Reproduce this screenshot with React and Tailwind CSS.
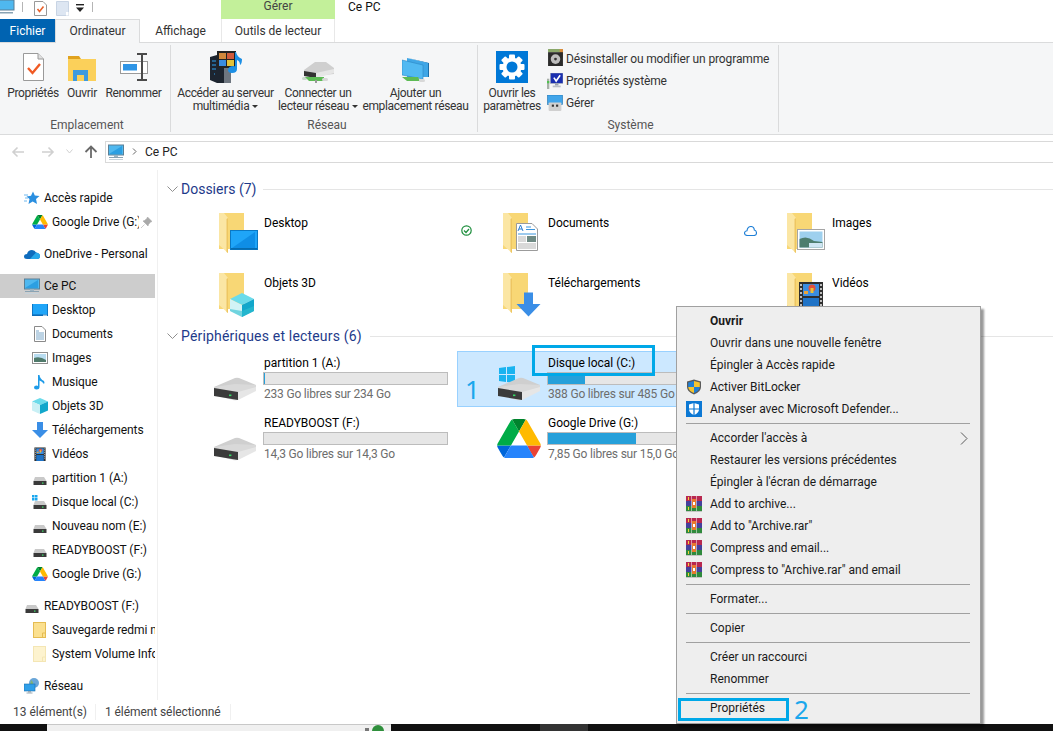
import React from "react";

const PcIcon = ({ s = 16 }) => (
  <svg width={s} height={s} viewBox="0 0 16 16" className="shrink-0">
    <rect x="0.5" y="1" width="15" height="10" fill="#4fb8ef" stroke="#5a7f95" strokeWidth="1" />
    <path d="M1 10 L14 2 V10Z" fill="#2c9fe2" />
    <rect x="6" y="11" width="4" height="2" fill="#9db4c2" />
    <rect x="1" y="13" width="14" height="1" fill="#8aa3b3" />
    <rect x="1" y="15" width="14" height="1" fill="#c5d2da" />
  </svg>
);
const GDrive = ({ w = 16, h = 14 }) => (
  <svg width={w} height={h} viewBox="0 0 87.3 78" className="shrink-0">
    <path d="m6.6 66.85 3.85 6.65c.8 1.4 1.95 2.5 3.3 3.3l13.75-23.8h-27.5c0 1.55.4 3.1 1.2 4.5z" fill="#0066da" />
    <path d="m43.65 25-13.75-23.8c-1.35.8-2.5 1.9-3.3 3.3l-25.4 44a9.06 9.06 0 0 0 -1.2 4.5h27.5z" fill="#00ac47" />
    <path d="m73.55 76.8c1.35-.8 2.5-1.9 3.3-3.3l1.6-2.75 7.65-13.25c.8-1.4 1.2-2.95 1.2-4.5h-27.502l5.852 11.5z" fill="#ea4335" />
    <path d="m43.65 25 13.75-23.8c-1.35-.8-2.9-1.2-4.5-1.2h-18.5c-1.6 0-3.15.45-4.5 1.2z" fill="#00832d" />
    <path d="m59.8 53h-32.3l-13.75 23.8c1.35.8 2.9 1.2 4.5 1.2h50.8c1.6 0 3.15-.45 4.5-1.2z" fill="#2684fc" />
    <path d="m73.4 26.5-12.7-22c-.8-1.4-1.95-2.5-3.3-3.3l-13.75 23.8 16.15 28h27.45c0-1.55-.4-3.1-1.2-4.5z" fill="#ffba00" />
  </svg>
);
const DriveSmall = ({ win }) => (
  <svg width="16" height="16" viewBox="0 0 16 16" className="shrink-0">
    {win && (
      <g fill="#1aa7ef">
        <rect x="0" y="1" width="2.5" height="2.5" /><rect x="3" y="1" width="2.5" height="2.5" />
        <rect x="0" y="4" width="2.5" height="2.5" /><rect x="3" y="4" width="2.5" height="2.5" />
      </g>
    )}
    <path d="M3 7 H12 L14.5 11 H1.5Z" fill="#c9c9c9" />
    <rect x="1.5" y="11" width="13" height="4" fill="#3a3a3a" />
    <rect x="10" y="12.5" width="1.5" height="1.2" fill="#3fe06a" />
  </svg>
);
const DriveBig = ({ win }) => (
  <svg width="46" height="50" viewBox="0 0 46 50" className="shrink-0">
    {win && (
      <g fill="#19b3f0">
        <path d="M2 2 L9 1 V8 H2Z" transform="translate(0,12)" />
        <path d="M10 1 L18 0 V8 H10Z" transform="translate(0,12)" />
        <path d="M2 9 H9 V16 L2 15Z" transform="translate(0,12)" />
        <path d="M10 9 H18 V17 L10 16Z" transform="translate(0,12)" />
      </g>
    )}
    <path d="M1 33 L22 24 Q24 23.5 26 24 L43 31 V34 L22 38Z" fill="#cfcfcf" />
    <path d="M1 33 L22 30 L43 31 V36 L24 46 Q22 46.5 20 46 L1 41Z" fill="#d9d9d9" />
    <path d="M1 34 L25 38 V46 L1 42Z" fill="#3b3b3b" />
    <path d="M25 38 L43 33 V37 L25 46Z" fill="#e6e6e6" />
    <rect x="16" y="40.5" width="2.4" height="1.6" fill="#35d966" />
  </svg>
);
const Folder = ({ children }) => (
  <svg width="44" height="44" viewBox="0 0 44 44" className="shrink-0 overflow-visible">
    <rect x="0" y="0" width="25" height="36" fill="#f8d775" />
    <path d="M0 0 H5 L9 5 V40 L0 32Z" fill="#fbe6a4" />
    <path d="M9 5 V40 L7.5 39 V6Z" fill="#eec662" />
    {children}
  </svg>
);
const FDesktop = () => (
  <Folder>
    <rect x="11.5" y="17.5" width="27" height="19" fill="#1fa5f8" stroke="#0a78c4" />
    <path d="M13 35 L36 19 V35Z" fill="#0f8ee6" />
    <rect x="12" y="35" width="26" height="1.5" fill="#066cb0" />
  </Folder>
);
const FDocs = () => (
  <Folder>
    <path d="M13.5 10.5 H29 L34.5 16 V37.5 H13.5Z" fill="#fff" stroke="#9b9b9b" />
    <path d="M15 18 L17.5 12 L20 18 M16 16 H19" stroke="#2d7fd3" strokeWidth="1" fill="none" />
    <path d="M23 14 H28 M23 16.5 H32 M15 21 H33" stroke="#3a95dd" strokeWidth="1" />
    <path d="M15 24 H23 M15 26 H23 M15 28 H23 M15 31 H33 M15 33 H33 M15 35 H33" stroke="#b3b3b3" strokeWidth="1" />
    <rect x="24" y="23" width="9" height="6" fill="#6f8a84" />
  </Folder>
);
const F3D = () => (
  <Folder>
    <path d="M11 26 L23 20 L35 26 L23 32Z" fill="#6bdbea" />
    <path d="M11 26 L23 32 V44 L11 38Z" fill="#d2f3f6" />
    <path d="M23 32 L35 26 V38 L23 44Z" fill="#12a7cb" />
    <path d="M23 38 L35 33 V38 L23 44 L11 38 V36Z" fill="#2fc0d1" opacity=".6" />
  </Folder>
);
const FDown = () => (
  <Folder>
    <path d="M21 19.5 H30 V31 H37.5 L25.5 43.5 L13.5 31 H21Z" fill="#3a8ee6" />
  </Folder>
);
const FImages = () => (
  <Folder>
    <rect x="10.5" y="16.5" width="27" height="20" fill="#fff" stroke="#a5a5a5" />
    <rect x="12.5" y="18.5" width="23" height="16" fill="#9ed0ee" />
    <path d="M12.5 26 Q20 22 27 28 L35.5 29 V34.5 H12.5Z" fill="#4d7d6e" />
    <rect x="22" y="30" width="13.5" height="4.5" fill="#cfe5f2" />
  </Folder>
);
const FilmArt = () => (
  <>
    <rect x="12" y="9" width="24" height="36" fill="#2f2f2f" />
    <g fill="#bdbdbd">
      <rect x="13" y="11" width="2" height="2" /><rect x="13" y="15" width="2" height="2" /><rect x="13" y="19" width="2" height="2" /><rect x="13" y="23" width="2" height="2" /><rect x="13" y="27" width="2" height="2" /><rect x="13" y="31" width="2" height="2" />
      <rect x="33" y="11" width="2" height="2" /><rect x="33" y="15" width="2" height="2" /><rect x="33" y="19" width="2" height="2" /><rect x="33" y="23" width="2" height="2" /><rect x="33" y="27" width="2" height="2" /><rect x="33" y="31" width="2" height="2" />
    </g>
    <rect x="16" y="11" width="16" height="12" fill="#3a8de0" />
    <circle cx="25" cy="15" r="3.5" fill="#e2503c" />
    <rect x="23.5" y="15" width="3" height="5" fill="#e8c23a" />
    <rect x="17" y="18" width="4" height="3" fill="#e8a33a" />
    <rect x="16" y="25" width="16" height="14" fill="#1f73c6" />
  </>
);
const FVideo = () => <Folder><FilmArt /></Folder>;

const Rar = ({ s = 16 }) => (
  <svg width={s} height={s} viewBox="0 0 16 16" className="shrink-0">
    <rect x="0" y="0" width="16" height="5" fill="#b8284f" />
    <rect x="0" y="5" width="16" height="5" fill="#45409c" />
    <rect x="0" y="10" width="16" height="5" fill="#2f8a3c" />
    <rect x="0" y="15" width="16" height="1" fill="#c4c4c4" />
    <rect x="5" y="0" width="1" height="15" fill="#fff" opacity=".5" />
    <rect x="10" y="0" width="1" height="15" fill="#fff" opacity=".5" />
    <rect x="6" y="3" width="4" height="9" fill="#e8792c" />
    <rect x="7" y="6" width="2" height="3" fill="#fff" />
    <rect x="2" y="1" width="1" height="3" fill="#f2d13a" />
    <rect x="2" y="11" width="1" height="3" fill="#f2d13a" />
  </svg>
);
const ShieldUac = () => (
  <svg width="16" height="16" viewBox="0 0 16 16" className="shrink-0">
    <path d="M8 .5 L15 2.5 V8 Q15 13 8 15.5 Q1 13 1 8 V2.5Z" fill="#5a5a5a" />
    <path d="M8 2 V8 H2.2 V3.5Z" fill="#1f7fd6" />
    <path d="M8 2 L13.8 3.5 V8 H8Z" fill="#f4c430" />
    <path d="M2.2 8 H8 V14 Q3 12.5 2.2 8Z" fill="#f4c430" />
    <path d="M8 8 H13.8 Q13 12.5 8 14Z" fill="#1f7fd6" />
  </svg>
);
const Defender = () => (
  <svg width="16" height="16" viewBox="0 0 16 16" className="shrink-0">
    <rect width="16" height="16" fill="#0c78d4" />
    <path d="M8 2 L13 3.5 V8 Q13 12 8 14 Q3 12 3 8 V3.5Z" fill="#fff" />
    <path d="M7.4 2 H8.6 V14 H7.4Z M3 7.4 H13 V8.6 H3Z" fill="#0c78d4" />
  </svg>
);
const Star = () => (
  <svg width="16" height="16" viewBox="0 0 16 16" className="shrink-0">
    <path d="M9 1.5 L10.8 5.6 L15.5 6 L12 9 L13 14 L8.7 11.4 L4.5 14 L5.5 9 L2.5 6.5 L7 5.8Z" fill="#2a8fe0" />
    <path d="M0 5 H4 M1 8 H4 M0 11 H3" stroke="#6fb8ee" strokeWidth="1" />
  </svg>
);
const OneDrive = () => (
  <svg width="16" height="12" viewBox="0 0 16 12" className="shrink-0">
    <path d="M3 11 Q0 11 0 8.5 Q0 6 3 6 Q4 2 8 2 Q11 2 12 4.5 Q16 5 16 8 Q16 11 13 11Z" fill="#0f6cbd" />
    <path d="M6 11 L12 4.5 Q16 5 16 8 Q16 11 13 11Z" fill="#28a8ea" />
  </svg>
);
const Note = () => (
  <svg width="14" height="16" viewBox="0 0 14 16" className="shrink-0">
    <path d="M5 1 H6.5 Q7 5 11 7 Q12 9 11 10 Q9 7 6.5 6.5 V13 Q6.5 15.5 3.5 15.5 Q1 15.5 1 13.5 Q1 11.5 3.5 11.5 Q4.5 11.5 5 12Z" fill="#1e9be8" />
  </svg>
);
const DocSmall = () => (
  <svg width="14" height="16" viewBox="0 0 14 16" className="shrink-0">
    <path d="M1.5 .5 H9 L12.5 4 V15.5 H1.5Z" fill="#fff" stroke="#8a8a8a" />
    <path d="M3 5 H6 M3 7 H11 M3 9 H11 M3 11 H11 M3 13 H11" stroke="#7aa7c9" />
  </svg>
);
const ImgSmall = () => (
  <svg width="16" height="12" viewBox="0 0 16 12" className="shrink-0">
    <rect x=".5" y=".5" width="15" height="11" fill="#fff" stroke="#8f8f8f" />
    <rect x="2" y="2" width="12" height="8" fill="#b8dcf0" />
    <path d="M2 6 Q8 4 14 8 V10 H2Z" fill="#4f7a6b" />
  </svg>
);
const CubeSmall = () => (
  <svg width="16" height="16" viewBox="0 0 16 16" className="shrink-0">
    <path d="M0 3.5 L8 0 L16 3.5 L8 7Z" fill="#6bdbea" />
    <path d="M0 3.5 L8 7 V16 L0 12.5Z" fill="#c9f0f5" />
    <path d="M8 7 L16 3.5 V12.5 L8 16Z" fill="#12a7cb" />
  </svg>
);
const DownSmall = () => (
  <svg width="16" height="16" viewBox="0 0 16 16" className="shrink-0">
    <path d="M5 0 H11 V8 H16 L8 16 L0 8 H5Z" fill="#3a8ee6" />
  </svg>
);
const VideoSmall = () => (
  <svg width="14" height="14" viewBox="9 8 30 30" className="shrink-0"><FilmArt /></svg>
);
const MonitorBlue = () => (
  <svg width="16" height="12" viewBox="0 0 16 12" className="shrink-0">
    <rect width="16" height="12" fill="#0c6cb8" />
    <rect y="0" x=".8" width="14.4" height="10.4" fill="#1fa5f8" />
    <rect x="11" y="10.8" width="4" height=".8" fill="#fff" />
  </svg>
);
const MiniFolder = ({ light }) => (
  <svg width="14" height="16" viewBox="0 0 14 16" className="shrink-0">
    <rect x=".5" y=".5" width="12" height="15" fill={light ? "#fdf3cf" : "#fbe08f"} stroke={light ? "#f4e6b4" : "#e5bc52"} />
    <path d="M9.5 15.5 V11 H12.5" fill="none" stroke={light ? "#f4e6b4" : "#e5bc52"} />
  </svg>
);
const Globe = () => (
  <svg width="16" height="16" viewBox="0 0 16 16" className="shrink-0">
    <circle cx="10" cy="5" r="5" fill="#6aa6d8" />
    <path d="M7 2 Q10 4 9 8 L6 7Z" fill="#7fb37a" />
    <rect x="0" y="6" width="11" height="7" fill="#2f9fe8" stroke="#1a70b0" strokeWidth=".6" />
    <rect x="4" y="13" width="3" height="1.5" fill="#9aa9b3" />
    <rect x="2.5" y="14.5" width="6" height="1" fill="#9aa9b3" />
  </svg>
);

const Row = ({ level = 1, icon, selected, extra, children }) => (
  <div className={`flex h-6 items-center w-[155px] overflow-hidden ${level === 0 ? "pl-6" : "pl-8"} ${selected ? "bg-[#cdcdcd]" : ""}`}>
    <span className="w-4 h-4 flex items-center justify-center shrink-0">{icon}</span>
    <span className="ml-1 whitespace-nowrap text-[#111] tracking-[-0.05px]">{children}</span>
    {extra}
  </div>
);

const FolderTile = ({ icon, name, mark }) => (
  <div className="relative flex pl-[46px] pt-[5px]">
    {icon}
    <span className="ml-[1px] mt-[2px] h-4 leading-4 text-black whitespace-nowrap">{name}</span>
    {mark}
  </div>
);

const DriveTile = ({ icon, name, free, pct, selected, iconClass }) => (
  <div className={`flex w-[279px] h-[56px] border ${selected ? "bg-[#cce8ff] border-[#99d1ff]" : "border-transparent"}`}>
    <div className={`w-[89px] shrink-0 ${iconClass}`}>{icon}</div>
    <div className="pt-[3px] flex flex-col">
      <div className="h-4 leading-4 ml-[1px] text-black whitespace-nowrap">{name}</div>
      <div className="mt-[1px] w-[185px] h-[13px] bg-[#e6e6e6] border border-[#bcbcbc]">
        <div className="h-full bg-[#26a0da]" style={{ width: pct + "%" }} />
      </div>
      <div className="mt-[1px] h-4 leading-4 ml-[1px] text-[#6d6d6d] whitespace-nowrap tracking-[-0.2px]">{free}</div>
    </div>
  </div>
);

const MI = ({ icon, bold, chevron, children }) => (
  <div className="relative h-[22px] flex items-center pl-[9px]">
    <span className="w-4 h-4 flex items-center justify-center shrink-0">{icon}</span>
    <span className={`ml-2 whitespace-nowrap text-[#1a1a1a] ${bold ? "font-bold" : ""}`}>{children}</span>
    {chevron && (
      <svg width="8" height="13" viewBox="0 0 8 13" className="absolute right-[12px] top-[5px]">
        <path d="M1 .5 L7 6.5 L1 12.5" fill="none" stroke="#5a5a5a" />
      </svg>
    )}
  </div>
);
const Sep = () => <div className="h-[7px] flex items-center pl-[9px] pr-[10px]"><div className="h-px w-full bg-[#a0a0a0]" /></div>;

const RBtn = ({ w, icon, lines, arrow }) => (
  <div className={`flex flex-col items-center ${w}`}>
    <div className="h-[41px] flex items-end justify-center">{icon}</div>
    <div className="mt-[3px] leading-[13px] text-center text-[#333] whitespace-nowrap tracking-[-0.33px]">
      {lines.map((l, i) => (
        <div key={i} className="h-[13px]">
          {l}
          {arrow && i === lines.length - 1 && <span className="inline-block ml-[3px] mb-[2px] w-0 h-0 border-x-[3px] border-x-transparent border-t-[3px] border-t-[#333]" />}
        </div>
      ))}
    </div>
  </div>
);
const Group = ({ w, label, children }) => (
  <div className={`flex flex-col border-r border-[#dadbdc] my-[2px] ${w}`}>
    <div className="flex -mt-[2px]">{children}</div>
    <div className="mt-auto h-[14px] leading-[14px] text-center text-[#555]">{label}</div>
  </div>
);
const SmallRow = ({ icon, children }) => (
  <div className="h-[22px] flex items-center whitespace-nowrap text-[#333] tracking-[-0.13px]">
    <span className="w-4 flex justify-center shrink-0">{icon}</span>
    <span className="ml-[3px]">{children}</span>
  </div>
);

export default function App() {
  return (
    <div className="relative w-[1053px] h-[731px] overflow-hidden bg-white flex flex-col text-[12px] [font-family:Roboto,'Noto_Sans',sans-serif]">
      {/* title */}
      <div className="h-[19px] flex shrink-0">
        <div className="w-[221px] flex items-start">
          <svg width="16" height="15" viewBox="1 0 16 15" className="shrink-0"><rect x="0" y="0" width="15" height="10" fill="#4fb8ef" stroke="#5a7f95" /><rect x="1" y="12" width="13" height="1.5" fill="#8aa3b3" /></svg>
          <div className="ml-[6px] mt-[2px] w-px h-[10px] bg-[#b5b5b5]" />
          <svg width="13" height="15" viewBox="0 0 13 15" className="ml-[11px] mt-[1px]">
            <path d="M.5 .5 H9 L12.5 4 V14.5 H.5Z" fill="#fff" stroke="#999" />
            <path d="M3.5 8 L5.5 10.5 L9.5 5.5" fill="none" stroke="#e8622c" strokeWidth="1.6" />
          </svg>
          <svg width="13" height="15" viewBox="0 0 13 15" className="ml-[9px] mt-[1px]">
            <path d="M.5 .5 H12.5 V14.5 H.5Z" fill="#dde6f2" stroke="#c8d4e4" />
            <rect x="10" y="11" width="2.5" height="3.5" fill="#fff" />
          </svg>
          <svg width="8" height="9" viewBox="0 0 8 9" className="ml-[7px] mt-[4px]">
            <rect x="0" y="0" width="8" height="1.4" fill="#222" />
            <path d="M0 3.5 H8 L4 8Z" fill="#222" />
          </svg>
          <div className="ml-[8px] mt-[2px] w-px h-[10px] bg-[#b5b5b5]" />
        </div>
        <div className="w-[114px] bg-[#c3f09a] text-center text-[#444] leading-[13px]">Gérer</div>
        <div className="pl-[13px] pt-[1px] leading-[13px] text-[#111]">Ce PC</div>
      </div>
      {/* tabs */}
      <div className="h-[24px] shrink-0 flex border-b border-[#dadbdc] relative">
        <div className="w-[55px] h-[23px] bg-[#0063b1] text-white flex items-center justify-center">Fichier</div>
        <div className="w-[85px] h-[24px] bg-[#f5f6f7] border-x border-t border-[#dadbdc] text-[#333] flex items-center justify-center pb-[1px] z-10">Ordinateur</div>
        <div className="w-[81px] flex items-center justify-center text-[#333]">Affichage</div>
        <div className="w-[114px] border-x border-[#e8e8e8] flex items-center justify-center text-[#333]">Outils de lecteur</div>
      </div>
      {/* ribbon */}
      <div className="h-[92px] shrink-0 flex bg-[#f5f6f7] border-b border-[#dadbdc]">
        <Group w="w-[171px] pl-[4px]" label="Emplacement">
          <RBtn w="w-[58px]" lines={["Propriétés"]} icon={
            <svg width="21" height="28" viewBox="0 0 21 28" className="mb-[3px]">
              <path d="M.5 .5 H15 L20.5 6 V27.5 H.5Z" fill="#fff" stroke="#9a9a9a" />
              <path d="M15 .5 V6 H20.5" fill="#e0e0e0" stroke="#9a9a9a" />
              <path d="M5 15 L9.5 20 L17 11" fill="none" stroke="#f05a24" strokeWidth="2.4" />
            </svg>} />
          <RBtn w="w-[40px]" lines={["Ouvrir"]} icon={
            <svg width="28" height="25" viewBox="0 0 28 25" className="mb-[3px]">
              <path d="M0 0 H11 L13 3 H0Z" fill="#e0a21e" />
              <rect x="0" y="3" width="28" height="22" fill="#fbd05a" />
              <path d="M5 25 V14 H20 V25 H16 V19 H9 V25Z" fill="#3d9ade" />
            </svg>} />
          <RBtn w="w-[63px]" lines={["Renommer"]} icon={
            <svg width="28" height="28" viewBox="0 0 28 28" className="mb-[3px]">
              <rect x=".5" y="8.5" width="27" height="12" fill="#fff" stroke="#9a9a9a" />
              <rect x="3" y="11" width="14" height="6.5" fill="#2f95e6" />
              <path d="M17 1 H27 M17 27 H27 M22 1 V27" stroke="#4a4a4a" strokeWidth="2" fill="none" />
            </svg>} />
        </Group>
        <Group w="w-[307px] pl-[6px]" label="Réseau">
          <RBtn w="w-[97px]" arrow lines={["Accéder au serveur", "multimédia"]} icon={
            <svg width="32" height="32" viewBox="0 0 32 32" className="mb-[1px]">
              <path d="M0 6 L7 4 L21 6 V32 H7 L0 29Z" fill="#1d2530" />
              <path d="M14 8 V32 H21 V10Z" fill="#6e7680" />
              <path d="M2 10 H6 M2 14 H6 M2 18 H6 M4 23 H5" stroke="#2fa3ef" />
              <rect x="7" y="0" width="19" height="17" fill="#232323" />
              <rect x="9" y="2" width="7" height="6" fill="#d1883c" /><rect x="17" y="2" width="7" height="6" fill="#cf5a3c" />
              <rect x="9" y="9" width="7" height="6" fill="#3a8de0" /><rect x="17" y="9" width="7" height="6" fill="#e3c23a" />
              <path d="M26 1 Q27 6 32 8 Q32 13 30 14 Q30 10 27 9 V18 Q27 22 22 22 Q18 22 18 19 Q18 15 24 15 L25 15.5 V1Z" fill="#1c8fe5" />
            </svg>} />
          <RBtn w="w-[80px] ml-[4px]" arrow lines={["Connecter un", "lecteur réseau"]} icon={
            <svg width="32" height="23" viewBox="0 0 32 23">
              <path d="M2 9 L13 1 H24 L32 7 V13 L14 15 L2 13Z" fill="#cfcfcf" />
              <path d="M2 10 L14 12 V17 L2 15Z" fill="#333" />
              <path d="M14 12 L32 8 V12 L14 17Z" fill="#e6e6e6" />
              <rect x="0" y="16" width="5" height="3" rx="1.5" fill="#c9d7cc" />
              <path d="M3 16 H22 V20 H7Z" fill="#5dbb55" />
              <rect x="13" y="19" width="2" height="3" fill="#999" />
              <rect x="20" y="17" width="6" height="3" rx="1.5" fill="#d8d8d8" />
            </svg>} />
          <RBtn w="w-[105px] ml-[5px]" lines={["Ajouter un", "emplacement réseau"]} icon={
            <svg width="28" height="26" viewBox="0 0 28 26">
              <path d="M6 0 L27 5 V19 L24 19 V5Z" fill="#1d6fa8" />
              <path d="M5 0 L26 5 V19 H5Z" fill="#3fa6e6" />
              <path d="M0 2 L21 7 V21 L0 17Z" fill="#51b9f2" stroke="#2b86c4" strokeWidth=".6" />
              <path d="M0 19 H16 L18 23 H5Z" fill="#5dbb55" />
              <rect x="17" y="21" width="6" height="3" rx="1.5" fill="#d8d8d8" />
            </svg>} />
        </Group>
        <Group w="w-[301px] pl-[5px]" label="Système">
          <RBtn w="w-[58px]" lines={["Ouvrir les", "paramètres"]} icon={
            <svg width="32" height="32" viewBox="0 0 32 32" className="mb-[1px]">
              <rect width="32" height="32" fill="#0078d7" />
              <g transform="translate(16 16)" fill="#fff">
                <circle r="9.5" />
                <rect x="-3" y="-12.5" width="6" height="25" rx="1" />
                <rect x="-3" y="-12.5" width="6" height="25" rx="1" transform="rotate(45)" />
                <rect x="-3" y="-12.5" width="6" height="25" rx="1" transform="rotate(90)" />
                <rect x="-3" y="-12.5" width="6" height="25" rx="1" transform="rotate(135)" />
                <circle r="5.5" fill="#0078d7" />
              </g>
            </svg>} />
          <div className="ml-[6px] pt-[5px] flex flex-col">
            <SmallRow icon={
              <svg width="15" height="17" viewBox="0 0 14 16" className="-mt-[4px]">
                <rect width="14" height="3" fill="#8aa86a" /><rect x="11" width="3" height="8" fill="#d98c3a" />
                <rect y="3" width="14" height="13" fill="#2b2b2b" /><circle cx="7" cy="9.5" r="4.5" fill="#bdbdbd" /><circle cx="7" cy="9.5" r="1.3" fill="#333" />
              </svg>}>Désinstaller ou modifier un programme</SmallRow>
            <SmallRow icon={
              <svg width="16" height="16" viewBox="0 0 14 14">
                <rect x="0" y="5" width="2" height="9" fill="#a8b0a8" /><rect x="0" y="7" width="2" height="2" fill="#4fc24f" />
                <rect x="3" y="0" width="11" height="9" fill="#1a2fb0" stroke="#9aa3b0" strokeWidth=".5" />
                <path d="M6 4 L8 7 L11.5 2" fill="none" stroke="#fff" strokeWidth="1.4" />
                <rect x="7" y="9" width="3" height="2" fill="#9aa3b0" /><rect x="5" y="11" width="7" height="1.5" fill="#b9bfc7" />
              </svg>}>Propriétés système</SmallRow>
            <SmallRow icon={
              <svg width="16" height="16" viewBox="0 0 14 15">
                <rect width="14" height="9" fill="#41a5ea" stroke="#2276b3" strokeWidth=".6" />
                <rect x="1" y="7" width="12" height="8" rx="1" fill="#d0d0d0" />
                <rect x="4" y="9" width="2" height="2" fill="#333" /><rect x="8" y="9" width="2" height="2" fill="#333" />
              </svg>}>Gérer</SmallRow>
          </div>
        </Group>
      </div>
      {/* address */}
      <div className="h-[35px] shrink-0 flex items-center pb-[2px]">
        <div className="w-[105px] flex items-center">
          <svg width="14" height="12" viewBox="0 0 14 12" className="ml-[11px]"><path d="M13 6 H2 M6.5 1.5 L2 6 L6.5 10.5" fill="none" stroke="#d0d0d0" strokeWidth="1.6" /></svg>
          <svg width="14" height="12" viewBox="0 0 14 12" className="ml-[16px]"><path d="M1 6 H12 M7.5 1.5 L12 6 L7.5 10.5" fill="none" stroke="#d0d0d0" strokeWidth="1.6" /></svg>
          <svg width="7" height="5" viewBox="0 0 7 5" className="ml-[11px]"><path d="M.5 .5 L3.5 4 L6.5 .5" fill="none" stroke="#d0d0d0" /></svg>
          <svg width="14" height="14" viewBox="0 0 14 14" className="ml-[11px]"><path d="M7 13 V2 M1.5 7 L7 1.5 L12.5 7" fill="none" stroke="#6a6a6a" strokeWidth="1.8" /></svg>
        </div>
        <div className="flex-1 h-[22px] flex items-center border border-r-0 border-[#d9d9d9] pl-[2px] text-[#222]">
          <PcIcon />
          <svg width="5" height="7" viewBox="0 0 5 7" className="ml-[8px]"><path d="M1 .5 L4 3.5 L1 6.5" fill="none" stroke="#666" /></svg>
          <span className="ml-[8px]">Ce PC</span>
        </div>
      </div>
      {/* content */}
      <div className="flex-1 min-h-0 flex">
        <div className="w-[158px] shrink-0 border-r border-[#f0f0f0] pt-4 flex flex-col gap-2">
          <div>
            <Row level={0} icon={<Star />}>Accès rapide</Row>
            <Row icon={<GDrive />} extra={
              <svg width="11" height="11" viewBox="0 0 11 11" className="ml-[2px] shrink-0"><path d="M6.5 0 L11 4.5 L9.5 5 L7.5 7.5 L7 9 L2 4 L3.5 3.5 L6 1.5Z M3.5 7.5 L0 11" fill="#a9a9a9" stroke="#a9a9a9" strokeWidth=".6" /></svg>
            }><span className="inline-block w-[87px] overflow-hidden align-bottom">Google Drive (G:)</span></Row>
          </div>
          <Row level={0} icon={<OneDrive />}>OneDrive - Personal</Row>
          <div>
            <Row level={0} icon={<PcIcon />} selected>Ce PC</Row>
            <Row icon={<MonitorBlue />}>Desktop</Row>
            <Row icon={<DocSmall />}>Documents</Row>
            <Row icon={<ImgSmall />}>Images</Row>
            <Row icon={<Note />}>Musique</Row>
            <Row icon={<CubeSmall />}>Objets 3D</Row>
            <Row icon={<DownSmall />}>Téléchargements</Row>
            <Row icon={<VideoSmall />}>Vidéos</Row>
            <Row icon={<DriveSmall />}>partition 1 (A:)</Row>
            <Row icon={<DriveSmall win />}>Disque local (C:)</Row>
            <Row icon={<DriveSmall />}>Nouveau nom (E:)</Row>
            <Row icon={<DriveSmall />}>READYBOOST (F:)</Row>
            <Row icon={<GDrive />}>Google Drive (G:)</Row>
          </div>
          <div>
            <Row level={0} icon={<DriveSmall />}>READYBOOST (F:)</Row>
            <Row icon={<MiniFolder />}>Sauvegarde redmi note</Row>
            <Row icon={<MiniFolder light />}>System Volume Information</Row>
          </div>
          <Row level={0} icon={<Globe />}>Réseau</Row>
        </div>
        <div className="flex-1 min-w-0 pl-[8px] pt-[8px]">
          <div className="h-[22px] flex items-center text-[#1e3a8a]">
            <svg width="11" height="6" viewBox="0 0 11 6" className="ml-[1px]"><path d="M.5 .5 L5.5 5.5 L10.5 .5" fill="none" stroke="#8f8f8f" /></svg>
            <span className="ml-[3px] text-[14px] whitespace-nowrap">Dossiers (7)</span>
            <div className="ml-[7px] flex-1 h-px bg-[#e5e5e5]" />
          </div>
          <div className="ml-[7px] mt-[8px] grid grid-cols-[repeat(3,284px)] grid-rows-[60px_58px]">
            <FolderTile icon={<FDesktop />} name="Desktop" mark={
              <svg width="11" height="11" viewBox="0 0 11 11" className="absolute left-[288px] top-[17px]"><circle cx="5.5" cy="5.5" r="4.7" fill="none" stroke="#1f8f3e" strokeWidth="1.2" /><path d="M3 5.5 L5 7.5 L8 4" fill="none" stroke="#1f8f3e" strokeWidth="1.2" /></svg>
            } />
            <FolderTile icon={<FDocs />} name="Documents" mark={
              <svg width="13" height="10" viewBox="0 0 13 10" className="absolute left-[287px] top-[18px]"><path d="M3.5 9.5 Q.5 9.5 .5 7 Q.5 5 3 4.8 Q3.5 .5 7 .5 Q10 .5 10.3 4 Q12.5 4.5 12.5 7 Q12.5 9.5 10 9.5Z" fill="none" stroke="#1f7fd6" strokeWidth="1.1" /></svg>
            } />
            <FolderTile icon={<FImages />} name="Images" />
            <FolderTile icon={<F3D />} name="Objets 3D" />
            <FolderTile icon={<FDown />} name="Téléchargements" />
            <FolderTile icon={<FVideo />} name="Vidéos" />
          </div>
          <div className="h-[22px] -mt-px flex items-center text-[#1e3a8a]">
            <svg width="11" height="6" viewBox="0 0 11 6" className="ml-[1px]"><path d="M.5 .5 L5.5 5.5 L10.5 .5" fill="none" stroke="#8f8f8f" /></svg>
            <span className="ml-[3px] text-[14px] tracking-[0.18px] whitespace-nowrap">Périphériques et lecteurs (6)</span>
            <div className="ml-[8px] flex-1 h-px bg-[#e5e5e5]" />
          </div>
          <div className="ml-[7px] mt-[4px] grid grid-cols-[repeat(3,284px)] gap-y-[4px]">
            <DriveTile icon={<DriveBig />} iconClass="pl-[39px] pt-[2px]" name="partition 1 (A:)" free="233 Go libres sur 234 Go" pct={0.5} />
            <DriveTile icon={<DriveBig win />} iconClass="pl-[39px] pt-[2px]" name="Disque local (C:)" free="388 Go libres sur 485 Go" pct={20} selected />
            <div />
            <DriveTile icon={<DriveBig />} iconClass="pl-[39px] pt-[2px]" name="READYBOOST (F:)" free="14,3 Go libres sur 14,3 Go" pct={0} />
            <DriveTile icon={<GDrive w={44} h={39} />} iconClass="pl-[39px] pt-[7px]" name="Google Drive (G:)" free="7,85 Go libres sur 15,0 Go" pct={48} />
          </div>
        </div>
      </div>
      {/* status */}
      <div className="h-[24px] shrink-0 flex items-center text-[#444]">
        <span className="pl-[13px] w-[95px]">13 élément(s)</span>
        <div className="w-px h-4 bg-[#f0f0f0]" />
        <span className="pl-[9px] w-[134px] whitespace-nowrap tracking-[-0.08px]">1 élément sélectionné</span>
        <div className="w-px h-4 bg-[#f0f0f0]" />
      </div>
      {/* taskbar strip */}
      <div className="h-[7px] shrink-0 flex bg-[#111]">
        <div className="ml-[47px] w-[344px] h-full bg-[#f0f0f0] border-t border-[#c8c8c8] flex justify-end pr-[6px]">
          <svg width="20" height="6" viewBox="0 0 20 6"><circle cx="13" cy="6" r="6" fill="#2f8f3c" /><rect x="0" y="3" width="4" height="3" fill="#777" /></svg>
        </div>
        <div className="ml-[149px] w-[48px] h-full bg-[#333]" />
      </div>

      {/* callouts */}
      <div className="absolute left-[532px] top-[345px] w-[123px] h-[31px] border-[3px] border-[#00a8e8]" />
      <div className="absolute left-[465px] top-[374px] text-[26px] leading-[30px] text-[#1aa7ec] [font-family:'Noto_Sans',sans-serif]">1</div>

      {/* context menu */}
      <div className="absolute left-[676px] top-[306px] w-[305px] h-[418px] bg-[#eeeeee] border border-[#a0a0a0] pt-[3px] shadow-[3px_3px_2px_rgba(0,0,0,0.4)]">
        <MI bold>Ouvrir</MI>
        <MI>Ouvrir dans une nouvelle fenêtre</MI>
        <MI>Épingler à Accès rapide</MI>
        <MI icon={<ShieldUac />}>Activer BitLocker</MI>
        <MI icon={<Defender />}>Analyser avec Microsoft Defender...</MI>
        <Sep />
        <MI chevron>Accorder l'accès à</MI>
        <MI>Restaurer les versions précédentes</MI>
        <MI>Épingler à l'écran de démarrage</MI>
        <MI icon={<Rar />}>Add to archive...</MI>
        <MI icon={<Rar />}>Add to "Archive.rar"</MI>
        <MI icon={<Rar />}>Compress and email...</MI>
        <MI icon={<Rar />}>Compress to "Archive.rar" and email</MI>
        <Sep />
        <MI>Formater...</MI>
        <Sep />
        <MI>Copier</MI>
        <Sep />
        <MI>Créer un raccourci</MI>
        <MI>Renommer</MI>
        <Sep />
        <MI>Propriétés</MI>
      </div>
      <div className="absolute left-[678px] top-[698px] w-[111px] h-[23px] border-[3px] border-[#00a8e8]" />
      <div className="absolute left-[794px] top-[694px] text-[26px] leading-[30px] text-[#1aa7ec] [font-family:'Noto_Sans',sans-serif]">2</div>
    </div>
  );
}
